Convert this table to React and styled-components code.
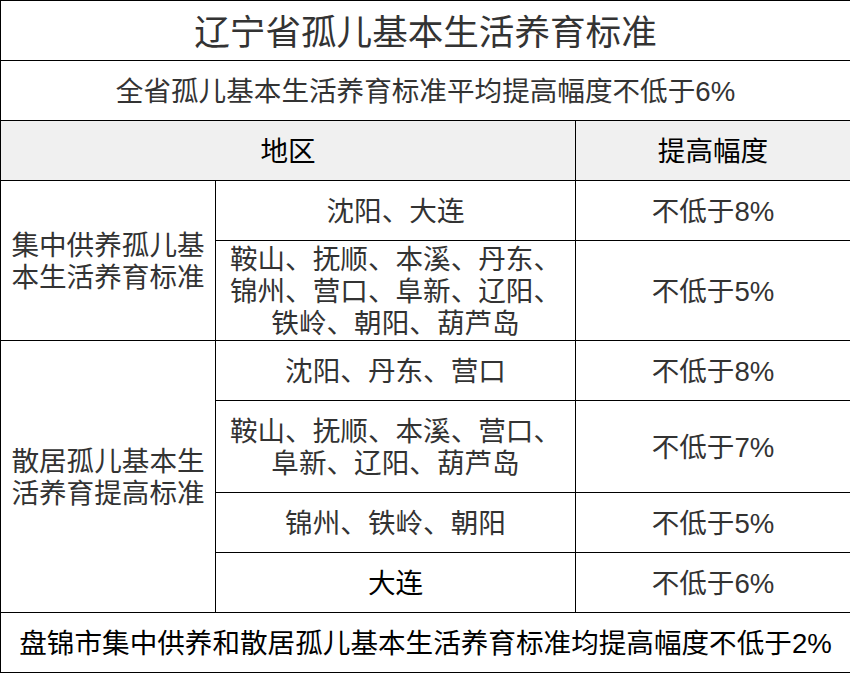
import React from "react";
import styled, { createGlobalStyle } from "styled-components";

const Global = createGlobalStyle`
  html, body { margin: 0; padding: 0; background: #fff; }
  body { font-family: "Liberation Sans", "Noto Sans CJK SC", sans-serif; }
`;

const Table = styled.table`
  width: 850px;
  border-collapse: collapse;
  table-layout: fixed;
  font-family: "Liberation Sans", "Noto Sans CJK SC", sans-serif;
  font-size: 27.6px;
  line-height: 32px;
  color: #333;
`;

const Row = styled.tr`
  height: ${(p) => p.$h}px;
`;

const Cell = styled.td`
  border: 1px solid #000;
  text-align: center;
  vertical-align: middle;
  padding: 3px 8px 0;
  color: ${(p) => (p.$dark ? "#000" : "#333")};
`;

const TitleCell = styled(Cell)`
  font-size: 35.6px;
  line-height: 40px;
  padding-top: 4px;
`;

const HeadCell = styled.th`
  border: 1px solid #000;
  background: #f0f0f0;
  font-weight: normal;
  color: #000;
  text-align: center;
  vertical-align: middle;
  padding: 2px 8px 0;
`;

const rows1 = [
  { area: "沈阳、大连", rate: "不低于8%", h: 60 },
  { area: "鞍山、抚顺、本溪、丹东、锦州、营口、阜新、辽阳、铁岭、朝阳、葫芦岛", rate: "不低于5%", h: 100 },
];

const rows2 = [
  { area: "沈阳、丹东、营口", rate: "不低于8%", h: 60 },
  { area: "鞍山、抚顺、本溪、营口、阜新、辽阳、葫芦岛", rate: "不低于7%", h: 92 },
  { area: "锦州、铁岭、朝阳", rate: "不低于5%", h: 60 },
  { area: "大连", rate: "不低于6%", h: 60, dark: true },
];

export default function App() {
  return (
    <>
      <Global />
      <Table>
        <colgroup>
          <col style={{ width: 215 }} />
          <col style={{ width: 360 }} />
          <col style={{ width: 275 }} />
        </colgroup>
        <tbody>
          <Row $h={60}>
            <TitleCell colSpan={3}>辽宁省孤儿基本生活养育标准</TitleCell>
          </Row>
          <Row $h={60}>
            <Cell colSpan={3}>全省孤儿基本生活养育标准平均提高幅度不低于6%</Cell>
          </Row>
          <Row $h={60}>
            <HeadCell colSpan={2}>地区</HeadCell>
            <HeadCell>提高幅度</HeadCell>
          </Row>
          {rows1.map((r, i) => (
            <Row $h={r.h} key={"a" + i}>
              {i === 0 && <Cell rowSpan={rows1.length}>集中供养孤儿基本生活养育标准</Cell>}
              <Cell>{r.area}</Cell>
              <Cell>{r.rate}</Cell>
            </Row>
          ))}
          {rows2.map((r, i) => (
            <Row $h={r.h} key={"b" + i}>
              {i === 0 && <Cell rowSpan={rows2.length}>散居孤儿基本生活养育提高标准</Cell>}
              <Cell $dark={r.dark}>{r.area}</Cell>
              <Cell>{r.rate}</Cell>
            </Row>
          ))}
          <Row $h={60}>
            <Cell colSpan={3} $dark>盘锦市集中供养和散居孤儿基本生活养育标准均提高幅度不低于2%</Cell>
          </Row>
        </tbody>
      </Table>
    </>
  );
}
